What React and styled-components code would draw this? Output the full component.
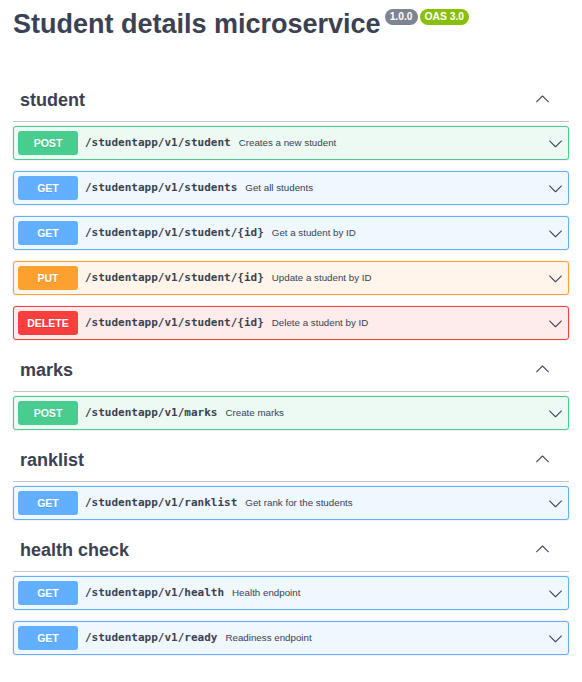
import React from "react";
import styled, { createGlobalStyle } from "styled-components";

const GlobalStyle = createGlobalStyle`
  html, body { margin: 0; padding: 0; background: #fff; }
  body { font-family: "Liberation Sans", Arial, sans-serif; color: #3b4151; }
`;

const METHODS = {
  POST: { main: "#49cc90", bg: "#edfaf4" },
  GET: { main: "#61affe", bg: "#eff7ff" },
  PUT: { main: "#fca130", bg: "#fff5ea" },
  DELETE: { main: "#f93e3e", bg: "#feecec" },
};

const TAGS = [
  {
    name: "student",
    ops: [
      ["POST", "/studentapp/v1/student", "Creates a new student"],
      ["GET", "/studentapp/v1/students", "Get all students"],
      ["GET", "/studentapp/v1/student/{id}", "Get a student by ID"],
      ["PUT", "/studentapp/v1/student/{id}", "Update a student by ID"],
      ["DELETE", "/studentapp/v1/student/{id}", "Delete a student by ID"],
    ],
  },
  { name: "marks", ops: [["POST", "/studentapp/v1/marks", "Create marks"]] },
  { name: "ranklist", ops: [["GET", "/studentapp/v1/ranklist", "Get rank for the students"]] },
  {
    name: "health check",
    ops: [
      ["GET", "/studentapp/v1/health", "Health endpoint"],
      ["GET", "/studentapp/v1/ready", "Readiness endpoint"],
    ],
  },
];

const Page = styled.div`
  padding: 0 13px 28px 13px;
`;

const Info = styled.div`
  display: flex;
  align-items: flex-start;
  gap: 2px;
  padding-top: 6px;
  margin-bottom: 39px;
`;

const Title = styled.h2`
  margin: 0 2px 0 0;
  font-family: "Liberation Sans", Arial, sans-serif;
  font-size: 27px;
  line-height: 36px;
  font-weight: 700;
  color: #3b4151;
`;

const Stamp = styled.span`
  margin-top: 3px;
  height: 16px;
  line-height: 16px;
  padding: 0 5px;
  border-radius: 8px;
  background: ${(p) => p.$color};
  color: #fff;
  font-family: "Liberation Sans", Arial, sans-serif;
  font-size: 10.3px;
  font-weight: 700;
`;

const TagHeader = styled.div`
  display: flex;
  align-items: center;
  height: 24px;
  padding: 7px 19px 9px 7px;
  border-bottom: 1px solid #c4c6cb;
  margin-bottom: 4px;
`;

const TagName = styled.h3`
  flex: 1;
  margin: 0;
  font-family: "Liberation Sans", Arial, sans-serif;
  font-size: 18px;
  line-height: 24px;
  font-weight: 700;
  color: #3b4151;
`;

const Arrow = styled.svg`
  width: 15px;
  height: 15px;
  flex: none;
  margin-bottom: ${(p) => (p.$up ? "3px" : "0")};
  margin-right: ${(p) => (p.$up ? "0" : "1px")};
  fill: #3b4151;
`;

const Block = styled.div`
  display: flex;
  align-items: center;
  padding: 4px;
  margin-bottom: 11px;
  border: 1px solid ${(p) => p.$main};
  background: ${(p) => p.$bg};
  border-radius: 3px;
  box-shadow: 0 0 2px rgba(0, 0, 0, 0.19);
`;

const Method = styled.span`
  width: 60px;
  height: 24px;
  flex: none;
  display: flex;
  align-items: center;
  justify-content: center;
  padding-bottom: 1px;
  box-sizing: border-box;
  border-radius: 3px;
  background: ${(p) => p.$main};
  color: #fff;
  font-family: "Liberation Sans", Arial, sans-serif;
  font-size: 10.5px;
  font-weight: 700;
  text-shadow: 0 1px 0 rgba(0, 0, 0, 0.1);
`;

const Path = styled.span`
  margin-left: 7px;
  margin-bottom: 1px;
  font-family: "DejaVu Sans Mono", monospace;
  font-size: 11px;
  font-weight: 600;
  color: #3b4151;
`;

const Desc = styled.span`
  flex: 1;
  margin-left: 8px;
  margin-bottom: 1px;
  font-family: "Liberation Sans", Arial, sans-serif;
  font-size: 9.75px;
  color: #3b4151;
`;

const UP =
  "M17.418 14.908c.272.268.709.268.979 0 .27-.268.271-.701 0-.969l-7.908-7.83c-.27-.268-.707-.268-.979 0l-7.908 7.83c-.27.268-.27.701 0 .969.271.268.709.268.979 0L10 7.767l7.418 7.141z";
const DOWN =
  "M17.418 6.109c.272-.268.709-.268.979 0s.271.701 0 .969l-7.908 7.83c-.27.268-.707.268-.979 0l-7.908-7.83c-.27-.268-.27-.701 0-.969.271-.268.709-.268.979 0L10 13.25l7.418-7.141z";

function Operation({ method, path, desc }) {
  const c = METHODS[method];
  return (
    <Block $main={c.main} $bg={c.bg}>
      <Method $main={c.main}>{method}</Method>
      <Path>{path}</Path>
      <Desc>{desc}</Desc>
      <Arrow viewBox="0 0 20 20">
        <path d={DOWN} />
      </Arrow>
    </Block>
  );
}

export default function App() {
  return (
    <Page>
      <GlobalStyle />
      <Info>
        <Title>Student details microservice</Title>
        <Stamp $color="#7d8492">1.0.0</Stamp>
        <Stamp $color="#89bf04">OAS 3.0</Stamp>
      </Info>
      {TAGS.map((t) => (
        <section key={t.name}>
          <TagHeader>
            <TagName>{t.name}</TagName>
            <Arrow $up viewBox="0 0 20 20">
              <path d={UP} />
            </Arrow>
          </TagHeader>
          {t.ops.map(([m, p, d], i) => (
            <Operation key={i} method={m} path={p} desc={d} />
          ))}
        </section>
      ))}
    </Page>
  );
}
